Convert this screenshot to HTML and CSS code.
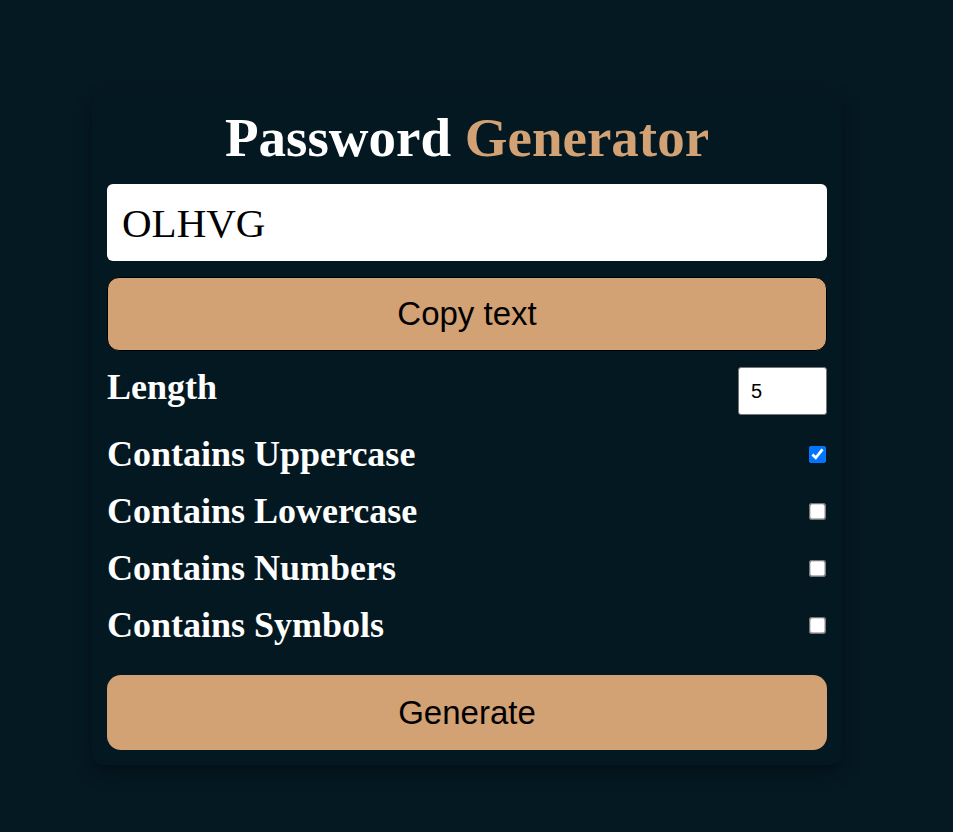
FILE: index.html
```html
<!DOCTYPE html>
<html lang="en">
<head>
<meta charset="utf-8">
<title>Password Generator</title>
<link rel="stylesheet" href="styles.css">
</head>
<body>
<main class="card">
  <h1 class="title">Password <span class="accent">Generator</span></h1>
  <input class="output" type="text" value="OLHVG" readonly>
  <button class="btn btn-copy">Copy text</button>
  <div class="row row-length">
    <label class="label" for="len">Length</label>
    <input id="len" class="num" type="number" value="5">
  </div>
  <div class="options">
    <div class="row">
      <label class="label" for="up">Contains Uppercase</label>
      <input id="up" class="check" type="checkbox" checked>
    </div>
    <div class="row">
      <label class="label" for="low">Contains Lowercase</label>
      <input id="low" class="check" type="checkbox">
    </div>
    <div class="row">
      <label class="label" for="num">Contains Numbers</label>
      <input id="num" class="check" type="checkbox">
    </div>
    <div class="row">
      <label class="label" for="sym">Contains Symbols</label>
      <input id="sym" class="check" type="checkbox">
    </div>
  </div>
  <button class="btn btn-generate">Generate</button>
</main>
</body>
</html>
```

FILE: styles.css
```css
html, body {
  margin: 0;
  padding: 0;
}
body {
  background: #051923;
  min-height: 832px;
  font-family: "Liberation Serif", "Times New Roman", serif;
  padding: 92px 0 0 92px;
  box-sizing: border-box;
}
.card {
  width: 750px;
  box-sizing: border-box;
  padding: 15px;
  background: #041822;
  border-radius: 12px;
  box-shadow: 0 8px 18px rgba(0, 0, 0, 0.35);
  display: flex;
  flex-direction: column;
  gap: 16px;
}
.title {
  margin: 0;
  font-size: 55px;
  font-weight: bold;
  line-height: 61px;
  color: #ffffff;
  text-align: center;
}
.accent {
  color: #d2a174;
}
.output {
  height: 77px;
  box-sizing: border-box;
  border: none;
  border-radius: 6px;
  padding: 0 15px;
  font-family: "Liberation Serif", "Times New Roman", serif;
  font-size: 41px;
  color: #000;
  background: #fff;
  outline: none;
}
.btn {
  background: #d2a174;
  color: #000;
  font-family: "Liberation Sans", Arial, sans-serif;
  font-size: 33px;
  cursor: pointer;
}
.btn-copy {
  height: 74px;
  border: 1px solid #000;
  border-radius: 12px;
}
.btn-generate {
  height: 75px;
  border: none;
  border-radius: 14px;
  margin-top: 13px;
}
.row {
  display: flex;
  justify-content: space-between;
  align-items: center;
}
.row-length {
  align-items: flex-start;
}
.label {
  color: #fff;
  font-size: 36px;
  font-weight: bold;
  line-height: 41px;
}
.num {
  width: 89px;
  height: 48px;
  box-sizing: border-box;
  border: 1px solid #767676;
  border-radius: 3px;
  padding: 0 12px;
  font-family: "Liberation Sans", Arial, sans-serif;
  font-size: 20px;
  color: #000;
  background: #fff;
}
.options {
  display: flex;
  flex-direction: column;
  gap: 16px;
  margin-top: 3px;
}
.check {
  width: 13px;
  height: 13px;
  margin: 0 1px 0 0;
  zoom: 1.3;
}
```
